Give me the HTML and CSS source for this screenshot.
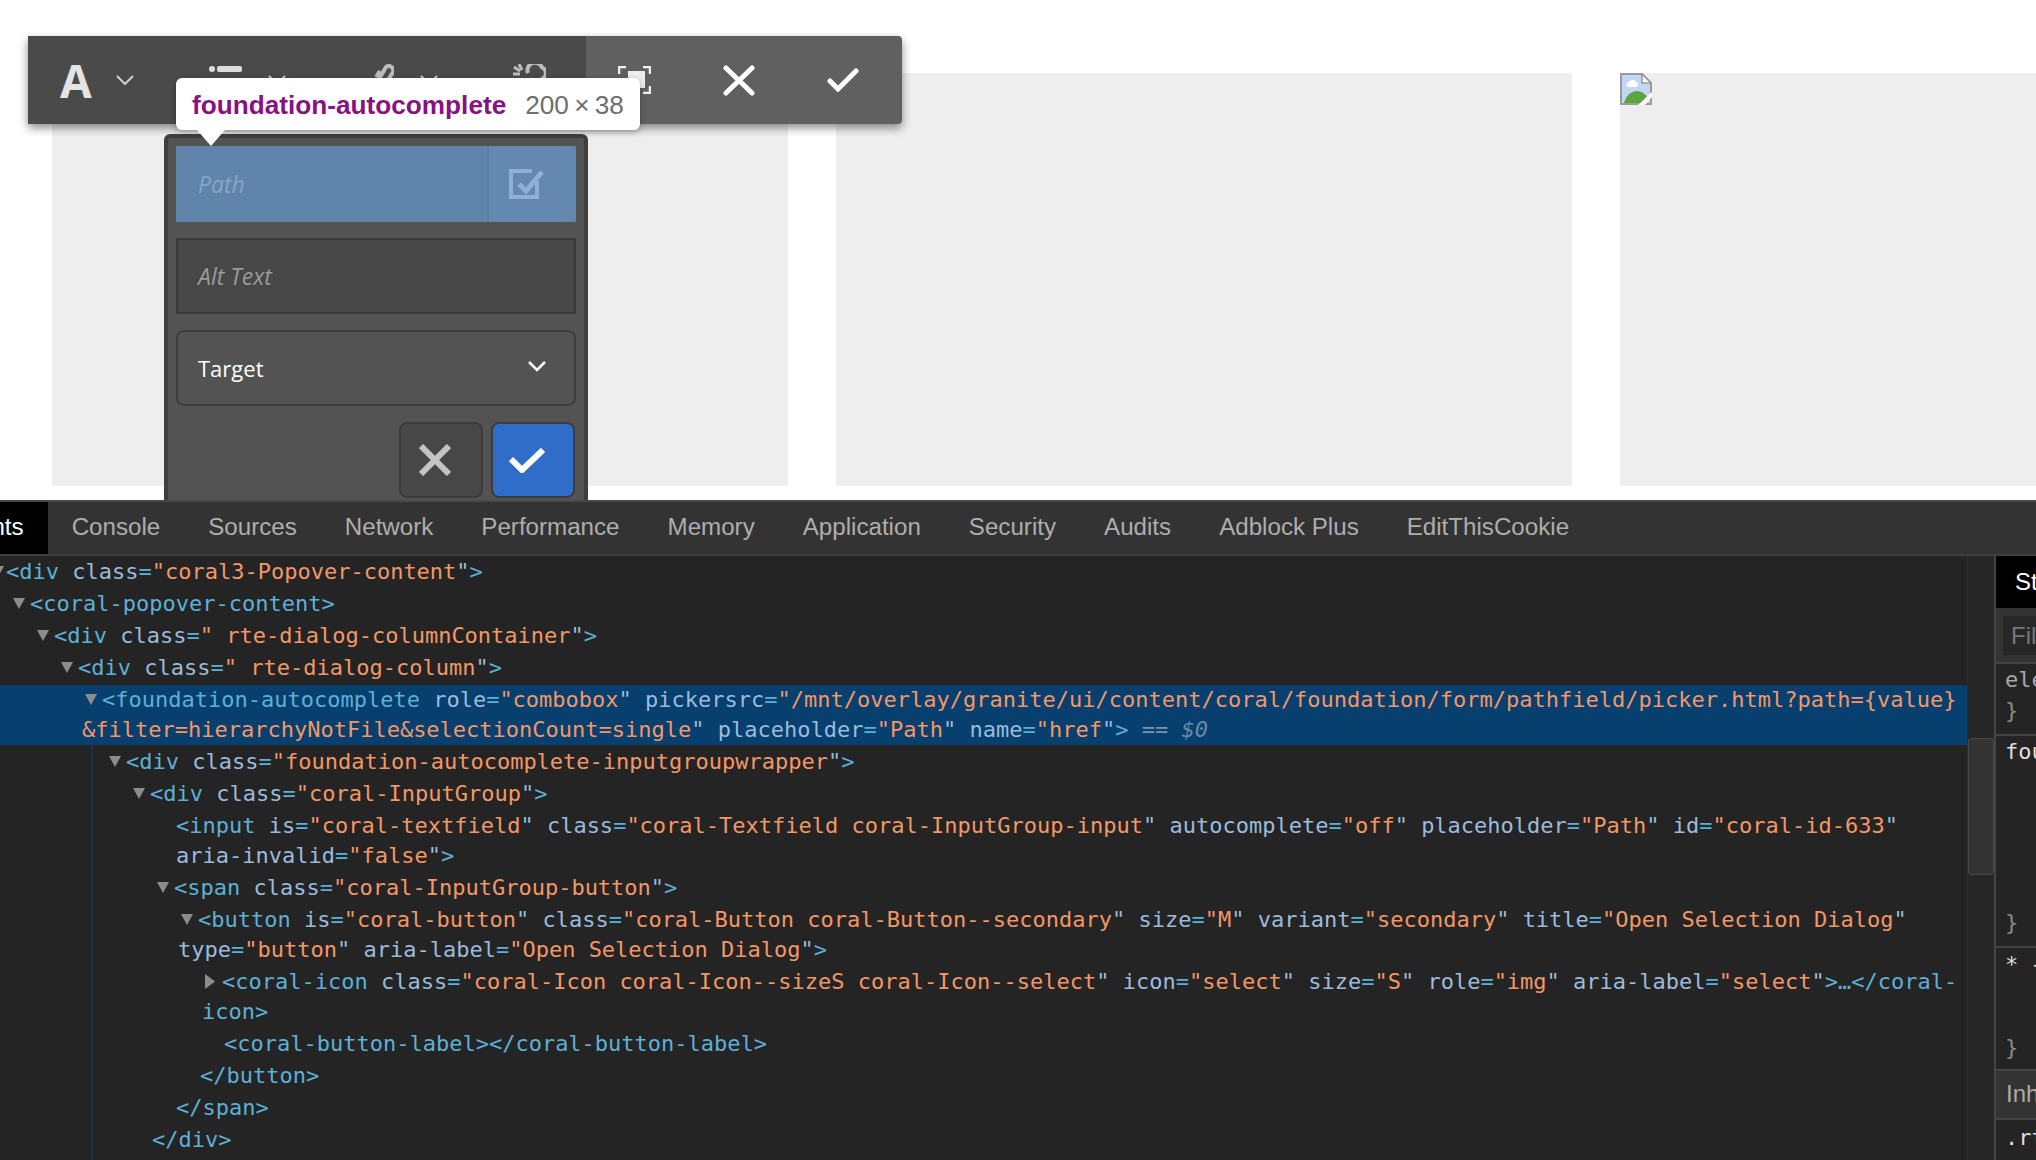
FILE: index.html
```html
<!DOCTYPE html>
<html lang="en">
<head>
    <meta charset="UTF-8">
    <title>foundation-autocomplete - DevTools</title>
    <link rel="stylesheet" href="styles.css">
</head>
<body>
    <div class="viewport">
        <div class="cards">
            <div class="card"></div>
            <div class="card"></div>
            <div class="card">
                <svg class="broken-img" width="32" height="32" viewBox="0 0 32 32">
                    <path d="M1 1H22L31 10V31H1Z" fill="#c3d6f2" stroke="#9a9a9a" stroke-width="2"/>
                    <path d="M22 1V10H31Z" fill="#fff" stroke="#9a9a9a" stroke-width="1.5"/>
                    <path d="M7 13a3 3 0 0 1 2-4 4 4 0 0 1 7 0 3 3 0 0 1 1 5H8a2 2 0 0 1-1-1Z" fill="#fff"/>
                    <path d="M4 30C6 22 12 18 17 18S26 22 27 24L21 30Z" fill="#5aa63c"/>
                    <path d="M18 32L32 19V24L25 32Z" fill="#fff"/>
                </svg>
            </div>
        </div>

        <div class="toolbar">
            <div class="tb-left">
                <div class="tb-group">
                    <span class="tb-letter">A</span>
                    <svg class="tb-chevron" width="18" height="10" viewBox="0 0 18 10"><path d="M1 1L9 9L17 1"/></svg>
                </div>
                <div class="tb-group">
                    <svg width="33" height="33" viewBox="0 0 33 33">
                        <circle cx="3" cy="5" r="3" fill="#ddd"/><rect x="8" y="2" width="25" height="6" rx="2" fill="#ddd"/>
                        <circle cx="3" cy="17" r="3" fill="#ddd"/><rect x="8" y="14" width="25" height="6" rx="2" fill="#ddd"/>
                        <circle cx="3" cy="28" r="3" fill="#ddd"/><rect x="8" y="25" width="25" height="6" rx="2" fill="#ddd"/>
                    </svg>
                    <svg class="tb-chevron" width="18" height="10" viewBox="0 0 18 10"><path d="M1 1L9 9L17 1"/></svg>
                </div>
                <div class="tb-group">
                    <svg width="33" height="33" viewBox="0 0 33 33" fill="none" stroke="#bdbdbd" stroke-width="4">
                        <path d="M18 15L25 3A4.5 4.5 0 0 1 32 8L27 16"/>
                        <path d="M15 13L19 7"/>
                    </svg>
                    <svg class="tb-chevron" width="18" height="10" viewBox="0 0 18 10"><path d="M1 1L9 9L17 1"/></svg>
                </div>
                <svg width="33" height="33" viewBox="0 0 33 33" fill="none" stroke="#bdbdbd" stroke-width="3">
                    <path d="M15 9A7.5 7.5 0 0 1 29 3.500A6 6 0 0 1 28 15" stroke-width="4"/>
                    <path d="M1 3L7 7M6 0L9 6M0 10H7"/>
                </svg>
            </div>
            <div class="tb-right">
                <svg width="33" height="28" viewBox="0 0 33 28" fill="none" stroke="#f0f0f0" stroke-width="2.5">
                    <path d="M1 8V1H8M25 1H32V8M32 20V27H25M8 27H1V20"/>
                    <rect x="10" y="5" width="17" height="17" fill="#ededed" stroke="none"/>
                </svg>
                <svg width="32" height="31" viewBox="0 0 32 31" stroke="#fff" stroke-width="5" stroke-linecap="round"><path d="M3 3L29 28M29 3L3 28"/></svg>
                <svg width="32" height="24" viewBox="0 0 32 24" fill="none" stroke="#fff" stroke-width="5" stroke-linecap="round"><path d="M3 13L11 21L29 3"/></svg>
            </div>
        </div>

        <div class="popover">
            <div class="field field-picked">
                <span class="field-text">Path</span>
                <span class="field-button">
                    <svg width="35" height="30" viewBox="0 0 35 30" fill="none" stroke="#8fb0d4" stroke-width="4">
                        <path d="M28 12V28H2V2H23"/>
                        <path d="M10 15L17 22L33 3" stroke-width="5"/>
                    </svg>
                </span>
            </div>
            <div class="field"><span class="field-text">Alt Text</span></div>
            <div class="select">
                <span>Target</span>
                <svg class="select-chevron" width="18" height="11" viewBox="0 0 18 11"><path d="M1 1L9 9L17 1"/></svg>
            </div>
            <div class="popover-actions">
                <div class="action">
                    <svg width="32" height="32" viewBox="0 0 32 32" stroke="#c4c4c4" stroke-width="6"><path d="M2 2L30 30M30 2L2 30"/></svg>
                </div>
                <div class="action action-ok">
                    <svg width="36" height="26" viewBox="0 0 36 26" fill="none" stroke="#fff" stroke-width="6"><path d="M2 12L13 23L34 3"/></svg>
                </div>
            </div>
        </div>

        <div class="inspect-tip">
            <span class="tip-name">foundation-autocomplete</span>
            <span class="tip-size">200&thinsp;×&thinsp;38</span>
        </div>
    </div>

    <div class="devtools">
        <div class="tabs">
            <span class="tab active">Elements</span>
            <span class="tab">Console</span>
            <span class="tab">Sources</span>
            <span class="tab">Network</span>
            <span class="tab">Performance</span>
            <span class="tab">Memory</span>
            <span class="tab">Application</span>
            <span class="tab">Security</span>
            <span class="tab">Audits</span>
            <span class="tab">Adblock Plus</span>
            <span class="tab">EditThisCookie</span>
        </div>
        <div class="panes">
            <div class="tree">
                <ol class="rows">
                    <li class="row d0 open">&lt;div <span class="n">class</span>=<span class="v">"coral3-Popover-content</span><span class="n">"</span>&gt;</li>
                    <li class="row d1 open">&lt;coral-popover-content&gt;</li>
                    <li class="row d2 open">&lt;div <span class="n">class</span>=<span class="v">" rte-dialog-columnContainer</span><span class="n">"</span>&gt;</li>
                    <li class="row d3 open">&lt;div <span class="n">class</span>=<span class="v">" rte-dialog-column</span><span class="n">"</span>&gt;</li>
                    <li class="row d4 open selected">&lt;foundation-autocomplete <span class="n">role</span>=<span class="v">"combobox</span><span class="n">"</span> <span class="n">pickersrc</span>=<span class="v">"/mnt/overlay/granite/ui/content/coral/foundation/form/pathfield/picker.html?path={value}<br>&amp;filter=hierarchyNotFile&amp;selectionCount=single</span><span class="n">"</span> <span class="n">placeholder</span>=<span class="v">"Path</span><span class="n">"</span> <span class="n">name</span>=<span class="v">"href</span><span class="n">"</span>&gt; <span class="dollar">== <em>$0</em></span></li>
                    <li class="row d5 open">&lt;div <span class="n">class</span>=<span class="v">"foundation-autocomplete-inputgroupwrapper</span><span class="n">"</span>&gt;</li>
                    <li class="row d6 open">&lt;div <span class="n">class</span>=<span class="v">"coral-InputGroup</span><span class="n">"</span>&gt;</li>
                    <li class="row d7 leaf">&lt;input <span class="n">is</span>=<span class="v">"coral-textfield</span><span class="n">"</span> <span class="n">class</span>=<span class="v">"coral-Textfield coral-InputGroup-input</span><span class="n">"</span> <span class="n">autocomplete</span>=<span class="v">"off</span><span class="n">"</span> <span class="n">placeholder</span>=<span class="v">"Path</span><span class="n">"</span> <span class="n">id</span>=<span class="v">"coral-id-633</span><span class="n">"</span><br><span class="n">aria-invalid</span>=<span class="v">"false</span><span class="n">"</span>&gt;</li>
                    <li class="row d7 open">&lt;span <span class="n">class</span>=<span class="v">"coral-InputGroup-button</span><span class="n">"</span>&gt;</li>
                    <li class="row d8 open">&lt;button <span class="n">is</span>=<span class="v">"coral-button</span><span class="n">"</span> <span class="n">class</span>=<span class="v">"coral-Button coral-Button--secondary</span><span class="n">"</span> <span class="n">size</span>=<span class="v">"M</span><span class="n">"</span> <span class="n">variant</span>=<span class="v">"secondary</span><span class="n">"</span> <span class="n">title</span>=<span class="v">"Open Selection Dialog</span><span class="n">"</span><br><span class="n">type</span>=<span class="v">"button</span><span class="n">"</span> <span class="n">aria-label</span>=<span class="v">"Open Selection Dialog</span><span class="n">"</span>&gt;</li>
                    <li class="row d9 closed">&lt;coral-icon <span class="n">class</span>=<span class="v">"coral-Icon coral-Icon--sizeS coral-Icon--select</span><span class="n">"</span> <span class="n">icon</span>=<span class="v">"select</span><span class="n">"</span> <span class="n">size</span>=<span class="v">"S</span><span class="n">"</span> <span class="n">role</span>=<span class="v">"img</span><span class="n">"</span> <span class="n">aria-label</span>=<span class="v">"select</span><span class="n">"</span>&gt;…&lt;/coral-<br>icon&gt;</li>
                    <li class="row d9 leaf">&lt;coral-button-label&gt;&lt;/coral-button-label&gt;</li>
                    <li class="row d8 leaf">&lt;/button&gt;</li>
                    <li class="row d7 leaf">&lt;/span&gt;</li>
                    <li class="row d6 leaf">&lt;/div&gt;</li>
                </ol>
                <div class="guide"></div>
            </div>
            <div class="scrollbar"><div class="thumb"></div></div>
            <div class="side">
                <div class="side-tab">Styles</div>
                <div class="filter-bar"><div class="filter-input">Filter</div></div>
                <div class="rule rule-element">
                    <div class="muted">element.style {</div>
                    <div class="brace">}</div>
                </div>
                <div class="rule rule-host">
                    <div>foundation-autocomplete {</div>
                    <div class="brace">}</div>
                </div>
                <div class="rule rule-all">
                    <div>* {</div>
                    <div class="brace">}</div>
                </div>
                <div class="inherited">Inherited from</div>
                <div class="rule rule-last">
                    <div>.rte-dialog-column,</div>
                    <div>coral-popover {</div>
                </div>
            </div>
        </div>
    </div>
</body>
</html>
```

FILE: styles.css
```css
html, body {
    margin: 0;
    padding: 0;
    height: 1160px;
    overflow: hidden;
    background-color: #242424;
}

/* inspected page */
.viewport {
    position: relative;
    height: 500px;
    overflow: hidden;
    background-color: white;
}
.cards {
    display: flex;
    gap: 48px;
    padding: 73px 0 0 52px;
}
.card {
    flex: none;
    width: 736px;
    height: 413px;
    background-color: #eeeeee;
}
.broken-img {
    display: block;
}

/* rte toolbar */
.toolbar {
    position: absolute;
    top: 36px;
    left: 28px;
    width: 874px;
    height: 88px;
    display: flex;
    border-radius: 0 4px 4px 0;
    box-shadow: 0 4px 10px rgba(0, 0, 0, 0.45);
}
.tb-left {
    flex: none;
    width: 526px;
    padding-left: 32px;
    display: flex;
    align-items: center;
    gap: 75px;
    background-color: #4a4a4a;
}
.tb-group {
    display: flex;
    align-items: center;
    gap: 26px;
}
.tb-letter {
    width: 30px;
    font-family: "Open Sans", sans-serif;
    font-size: 46px;
    font-weight: 700;
    line-height: 46px;
    text-align: center;
    color: #e4e4e4;
}
.tb-chevron path {
    fill: none;
    stroke: #cfcfcf;
    stroke-width: 2;
}
.tb-right {
    flex: 1;
    padding-left: 32px;
    display: flex;
    align-items: center;
    gap: 72px;
    background-color: #606060;
    border-radius: 0 4px 4px 0;
}

/* link dialog */
.popover {
    position: absolute;
    top: 134px;
    left: 164px;
    width: 400px;
    height: 354px;
    padding: 8px;
    display: flex;
    flex-direction: column;
    gap: 16px;
    background-color: #535353;
    border: 4px solid #3f3f3f;
    border-radius: 6px 6px 0 0;
}
.field {
    flex: none;
    box-sizing: border-box;
    height: 76px;
    display: flex;
    align-items: center;
    justify-content: space-between;
    background-color: #474747;
    border: 2px solid #3a3a3a;
}
.field-text {
    padding-left: 20px;
    font-family: "Open Sans", sans-serif;
    font-size: 23px;
    font-style: italic;
    color: #9a9a9a;
}
.field-picked {
    background-color: #6084aa;
    border: none;
}
.field-picked .field-text {
    padding-left: 22px;
    color: #86a6c8;
}
.field-button {
    box-sizing: border-box;
    width: 89px;
    height: 100%;
    padding-right: 13px;
    display: flex;
    align-items: center;
    justify-content: center;
    background-color: #6488af;
    border-left: 2px solid #5b7fa5;
    border-radius: 0 10px 10px 0;
}
.select {
    flex: none;
    box-sizing: border-box;
    height: 76px;
    padding: 0 28px 4px 20px;
    display: flex;
    align-items: center;
    justify-content: space-between;
    border: 2px solid #3d3d3d;
    border-radius: 8px;
    font-family: "Open Sans", sans-serif;
    font-size: 22px;
    color: white;
}
.select span {
    padding-top: 4px;
}
.select-chevron path {
    fill: none;
    stroke: white;
    stroke-width: 2.5;
}
.popover-actions {
    display: flex;
    justify-content: flex-end;
    gap: 8px;
    padding-right: 1px;
}
.action {
    box-sizing: border-box;
    width: 84px;
    height: 76px;
    display: flex;
    align-items: center;
    justify-content: center;
    padding-right: 12px;
    background-color: #474747;
    border: 2px solid #3c3c3c;
    border-radius: 8px;
}
.action-ok {
    background-color: #2f6dc8;
}

/* element highlight tooltip */
.inspect-tip {
    position: absolute;
    top: 78px;
    left: 176px;
    box-sizing: border-box;
    width: 464px;
    height: 52px;
    padding: 2px 0 0 16px;
    display: flex;
    align-items: center;
    gap: 19px;
    background-color: white;
    border-radius: 6px;
    box-shadow: 0 2px 6px rgba(0, 0, 0, 0.3);
    font-family: "Liberation Sans", Arial, sans-serif;
    font-size: 26.2px;
}
.inspect-tip::after {
    content: "";
    position: absolute;
    top: 52px;
    left: 21px;
    width: 28px;
    height: 16px;
    background-color: white;
    clip-path: polygon(0 0, 100% 0, 50% 100%);
}
.tip-name {
    font-weight: bold;
    color: #881280;
}
.tip-size {
    color: #6e6e6e;
}

/* devtools */
.devtools {
    height: 660px;
    display: flex;
    flex-direction: column;
    border-top: 2px solid #494949;
    box-sizing: border-box;
    overflow: hidden;
}
.tabs {
    flex: none;
    height: 52px;
    margin-left: -101px;
    display: flex;
    background-color: #333333;
    border-bottom: 2px solid #3f3f3f;
    font-family: "Liberation Sans", Arial, sans-serif;
    font-size: 24.15px;
}
.tab {
    padding: 0 24px;
    line-height: 50px;
    color: #aeaeae;
}
.tab.active {
    background-color: black;
    color: white;
}
.panes {
    flex: 1;
    display: flex;
    min-height: 0;
    font-family: "DejaVu Sans Mono", monospace;
    font-size: 22px;
    line-height: 30px;
}
.tree {
    position: relative;
    flex: none;
    width: 1967px;
    overflow: hidden;
}
.rows {
    margin: 0;
    padding: 1px 0 0;
    list-style: none;
    display: flex;
    flex-direction: column;
    gap: 2px;
}
.row {
    white-space: pre;
    color: #5db0d7;
    padding-left: calc(24px * var(--d) - 14px);
}
.row.leaf {
    padding-left: calc(24px * var(--d) + 8px);
}
.d0 { --d: 0; margin-left: -14px; }
.d1 { --d: 1; }
.d2 { --d: 2; }
.d3 { --d: 3; }
.d4 { --d: 4; }
.d5 { --d: 5; }
.d6 { --d: 6; }
.d7 { --d: 7; }
.d8 { --d: 8; }
.d9 { --d: 9; }
.open::before,
.closed::before {
    content: "";
    display: inline-block;
    margin: 0 5px 0 3px;
    width: 12px;
    height: 11px;
    vertical-align: 2px;
    background-color: #8c8c8c;
    clip-path: polygon(0 0, 100% 0, 50% 100%);
}
.closed::before {
    clip-path: polygon(0 0, 85% 50%, 0 100%);
    height: 15px;
    vertical-align: 0;
}
.d0::before {
    margin: 0 2px 0 6px;
}
.n {
    color: #9bbbdc;
}
.v {
    color: #f29766;
}
.selected {
    background-color: #073f6e;
}
.dollar {
    color: #7c95ad;
}
.dollar em {
    color: #6a8aa6;
}
.guide {
    position: absolute;
    left: 91px;
    top: 190px;
    bottom: 0;
    width: 2px;
    background-color: #1c3050;
}
.scrollbar {
    flex: none;
    width: 26px;
    position: relative;
    background-color: #262626;
    border-left: 1px solid #2e2e2e;
}
.thumb {
    position: absolute;
    top: 182px;
    left: 0;
    box-sizing: border-box;
    width: 26px;
    height: 137px;
    background-color: #343434;
    border: 1px solid #484848;
    border-radius: 3px;
}
.side {
    flex: none;
    width: 41px;
    border-left: 2px solid #454545;
    overflow: hidden;
    white-space: nowrap;
    color: #dddddd;
}
.side-tab {
    height: 52px;
    padding-left: 19px;
    background-color: black;
    color: white;
    font-family: "Liberation Sans", Arial, sans-serif;
    font-size: 24px;
    line-height: 52px;
}
.filter-bar {
    box-sizing: border-box;
    height: 56px;
    padding: 8px 0 0 7px;
    background-color: #333333;
    border-bottom: 2px solid #444444;
}
.filter-input {
    height: 39px;
    padding-left: 8px;
    background-color: #272727;
    color: #777777;
    font-family: "Liberation Sans", Arial, sans-serif;
    font-size: 24px;
    line-height: 39px;
}
.rule {
    box-sizing: border-box;
    padding: 1px 0 0 9px;
    border-bottom: 2px solid #444444;
}
.rule-element { height: 72px; }
.rule-host { height: 212px; }
.rule-all { height: 123px; padding-top: 2px; }
.rule-last { border-bottom: none; padding-top: 3px; }
.rule-element .brace { margin-top: 1px; }
.rule-host .brace { margin-top: 141px; }
.rule-all .brace { margin-top: 53px; }
.muted {
    color: #a8a8a8;
}
.brace {
    color: #8a8a8a;
}
.inherited {
    box-sizing: border-box;
    height: 49px;
    padding-left: 10px;
    background-color: #333333;
    border-bottom: 2px solid #444444;
    color: #aaaaaa;
    font-family: "Liberation Sans", Arial, sans-serif;
    font-size: 24px;
    line-height: 46px;
}
```
